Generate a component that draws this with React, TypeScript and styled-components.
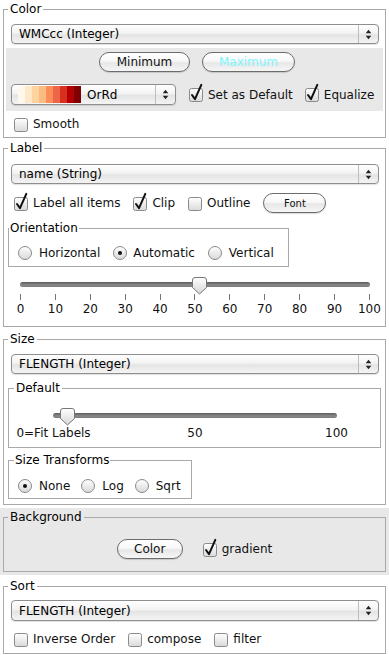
import React from 'react';
import styled, { createGlobalStyle } from 'styled-components';

const Global = createGlobalStyle`
  html, body { margin: 0; padding: 0; background: #fff; }
  body { font-family: "DejaVu Sans", sans-serif; font-size: 12px; color: #000; }
  * { box-sizing: border-box; }
`;

const FONT = `"DejaVu Sans", "Liberation Sans", sans-serif`;

const Page = styled.div`
  width: 389px;
  display: flex;
  flex-direction: column;
  padding-top: 2px;
`;

const Panel = styled.div<{ $gray?: boolean; $mt?: number }>`
  margin-top: ${p => p.$mt ?? 0}px;
  padding: ${p => (p.$gray ? '2px 3px 3px' : '0 3px')};
  background: ${p => (p.$gray ? '#e8e8e8' : 'transparent')};
`;

const Box = styled.fieldset<{ $pt?: number; $pb?: number; $pl?: number; $pr?: number; $w?: number; $mt?: number }>`
  margin: ${p => p.$mt ?? 0}px 0 0 0;
  padding: ${p => p.$pt ?? 0}px ${p => p.$pr ?? 4}px ${p => p.$pb ?? 0}px ${p => p.$pl ?? 4}px;
  border: 1px solid #a9a9a9;
  min-width: 0;
  ${p => (p.$w ? `width: ${p.$w}px;` : '')}
`;

const Legend = styled.legend<{ $px?: number }>`
  padding: 0 ${p => p.$px ?? 2}px;
  font: 12px/14px ${FONT};
  color: #000;
`;

const SelectBox = styled.div<{ $mt?: number; $h?: number; $w?: number; $inline?: boolean }>`
  display: flex;
  align-items: stretch;
  height: ${p => p.$h ?? 20}px;
  margin: ${p => (p.$inline ? '0' : `${p.$mt ?? 0}px 2px 0 3px`)};
  ${p => (p.$w ? `width: ${p.$w}px; flex: none;` : '')}
  border: 1px solid #8e8e8e;
  border-radius: 4px;
  background: linear-gradient(#ffffff, #f3f3f3 45%, #e4e4e4 55%, #f4f4f4);
  box-shadow: 0 1px 1px rgba(0, 0, 0, 0.12);
  overflow: hidden;
`;

const SelectText = styled.span<{ $pl?: number }>`
  flex: 1;
  padding-left: ${p => p.$pl ?? 7}px;
  line-height: ${p => 'inherit'};
  display: flex;
  align-items: center;
  white-space: nowrap;
  font: 12px ${FONT};
`;

const SelectArrows = styled.span`
  width: 20px;
  flex: none;
  border-left: 1px solid #bdbdbd;
  display: flex;
  align-items: center;
  justify-content: center;
`;

const Swatch = styled.span`
  display: flex;
  margin: 1px 0 1px 6px;
  flex: none;
`;

const SwatchCell = styled.span<{ $c: string }>`
  width: 7px;
  background: ${p => p.$c};
`;

const Band = styled.div`
  margin: 4px -2px 0 -2px;
  padding: 4px 0 6px 5px;
  background: #e8e8e8;
  display: flex;
  flex-direction: column;
  gap: 12px;
`;

const ButtonRow = styled.div<{ $gap?: number }>`
  display: flex;
  justify-content: center;
  gap: ${p => p.$gap ?? 12}px;
`;

const Row = styled.div<{ $mt?: number; $pl?: number; $gap?: number; $h?: number; $center?: boolean }>`
  display: flex;
  align-items: center;
  ${p => (p.$center ? 'justify-content: center;' : '')}
  margin-top: ${p => p.$mt ?? 0}px;
  padding-left: ${p => p.$pl ?? 0}px;
  gap: ${p => p.$gap ?? 13}px;
  height: ${p => p.$h ?? 16}px;
`;

const PillButton = styled.button<{ $w: number; $small?: boolean; $ghost?: boolean }>`
  width: ${p => p.$w}px;
  height: 20px;
  padding: 0;
  flex: none;
  border: 1px solid #6c6c6c;
  border-radius: 10px;
  background: linear-gradient(#ffffff 0%, #f8f8f8 45%, #e7e7e7 55%, #f6f6f6 100%);
  box-shadow: 0 1px 1px rgba(0, 0, 0, 0.15);
  font: ${p => (p.$small ? '10px' : '12px')} ${FONT};
  color: ${p => (p.$ghost ? '#80f6ff' : '#111')};
`;

const Option = styled.label<{ $ml?: number; $gapText?: number }>`
  display: flex;
  align-items: center;
  gap: ${p => p.$gapText ?? 5}px;
  margin-left: ${p => p.$ml ?? 0}px;
  white-space: nowrap;
  font: 12px ${FONT};
  color: #111;
`;

const Glyph = styled.svg`
  overflow: visible;
  flex: none;
  display: block;
`;

const SliderBlock = styled.div<{ $mt?: number; $ml: number; $w: number }>`
  margin: ${p => p.$mt ?? 0}px 0 0 ${p => p.$ml}px;
  width: ${p => p.$w}px;
`;

const TrackArea = styled.div`
  position: relative;
  height: 17px;
  padding-top: 5px;
`;

const Track = styled.div`
  height: 5px;
  border-radius: 3px;
  background: linear-gradient(#5c5c5c, #8a8a8a 60%, #7a7a7a);
`;

const Thumb = styled.div`
  position: absolute;
  top: 0;
`;

const TickRow = styled.div<{ $mt?: number }>`
  display: flex;
  justify-content: space-between;
  margin-top: ${p => p.$mt ?? 0}px;
`;

const Tick = styled.div`
  width: 1px;
  display: flex;
  flex-direction: column;
  align-items: center;
`;

const TickLine = styled.div`
  width: 1px;
  height: 6px;
  background: #777;
`;

const TickLabel = styled.span<{ $mt?: number }>`
  margin-top: ${p => p.$mt ?? 2}px;
  white-space: nowrap;
  font: 12px/14px ${FONT};
  color: #111;
`;

const Arrows = () => (
  <svg width="7" height="11" viewBox="0 0 7 11">
    <path d="M3.5 0.8 L6.3 4.2 H0.7 Z M0.7 6.8 H6.3 L3.5 10.2 Z" fill="#222" />
  </svg>
);

const Check = ({ on }: { on?: boolean }) => (
  <Glyph width="14" height="13" viewBox="0 0 14 13">
    <defs>
      <linearGradient id="cbg" x1="0" y1="0" x2="0" y2="1">
        <stop offset="0" stopColor="#ffffff" />
        <stop offset="1" stopColor="#dadada" />
      </linearGradient>
    </defs>
    <rect x="0.5" y="0.5" width="13" height="13" rx="2" fill="url(#cbg)" stroke="#8a8a8a" />
    {on && (
      <path d="M3 7 L6 11.2 L12.3 -3.2" fill="none" stroke="#111" strokeWidth="2" strokeLinecap="round" strokeLinejoin="round" />
    )}
  </Glyph>
);

const Radio = ({ on }: { on?: boolean }) => (
  <Glyph width="14" height="14" viewBox="0 0 14 14">
    <defs>
      <linearGradient id="rbg" x1="0" y1="0" x2="0" y2="1">
        <stop offset="0" stopColor="#ffffff" />
        <stop offset="1" stopColor="#d8d8d8" />
      </linearGradient>
    </defs>
    <circle cx="7" cy="7" r="6.5" fill="url(#rbg)" stroke="#8a8a8a" />
    {on && <circle cx="7" cy="7" r="2" fill="#111" />}
  </Glyph>
);

const ThumbIcon = () => (
  <svg width="15" height="18" viewBox="0 0 15 18">
    <defs>
      <linearGradient id="tbg" x1="0" y1="0" x2="0" y2="1">
        <stop offset="0" stopColor="#ffffff" />
        <stop offset="1" stopColor="#d6d6d6" />
      </linearGradient>
    </defs>
    <path d="M3 0.5 H12 Q14.5 0.5 14.5 3 V10.5 L7.5 17 L0.5 10.5 V3 Q0.5 0.5 3 0.5 Z" fill="url(#tbg)" stroke="#777" />
  </svg>
);

const Select = ({ text, mt, h }: { text: string; mt: number; h?: number }) => (
  <SelectBox $mt={mt} $h={h}>
    <SelectText>{text}</SelectText>
    <SelectArrows>
      <Arrows />
    </SelectArrows>
  </SelectBox>
);

const ORRD = ['#fff7ec', '#fee8c8', '#fdd49e', '#fdbb84', '#fc8d59', '#ef6548', '#d7301f', '#b30000', '#7f0000'];
const TICKS = [0, 10, 20, 30, 40, 50, 60, 70, 80, 90, 100];

export default function App() {
  return (
    <Page>
      <Global />
      <Panel>
        <Box $pb={5}>
          <Legend>Color</Legend>
          <Select text="WMCcc (Integer)" mt={8} />
          <Band>
            <ButtonRow>
              <PillButton $w={91}>Minimum</PillButton>
              <PillButton $w={93} $ghost>Maximum</PillButton>
            </ButtonRow>
            <Row $h={21} $gap={0}>
              <SelectBox $inline $w={165} $h={21}>
                <Swatch>
                  {ORRD.map(c => (
                    <SwatchCell key={c} $c={c} />
                  ))}
                </Swatch>
                <SelectText $pl={6}>OrRd</SelectText>
                <SelectArrows>
                  <Arrows />
                </SelectArrows>
              </SelectBox>
              <Option $ml={13}>
                <Check on />
                Set as Default
              </Option>
              <Option $ml={12}>
                <Check on />
                Equalize
              </Option>
            </Row>
          </Band>
          <Row $mt={5} $pl={6}>
            <Option>
              <Check />
              Smooth
            </Option>
          </Row>
        </Box>
      </Panel>

      <Panel $mt={3}>
        <Box $pb={10}>
          <Legend>Label</Legend>
          <Select text="name (String)" mt={9} />
          <Row $mt={9} $pl={6} $h={20} $gap={13}>
            <Option>
              <Check on />
              Label all items
            </Option>
            <Option>
              <Check on />
              Clip
            </Option>
            <Option>
              <Check />
              Outline
            </Option>
            <PillButton $w={63} $small>Font</PillButton>
          </Row>
          <Box $mt={8} $w={281} $pl={0} $pr={0} $pb={5}>
            <Legend $px={1}>Orientation</Legend>
            <Row $mt={10} $pl={9} $gap={13}>
              <Option $gapText={7}>
                <Radio />
                Horizontal
              </Option>
              <Option $gapText={6}>
                <Radio on />
                Automatic
              </Option>
              <Option $gapText={7}>
                <Radio />
                Vertical
              </Option>
            </Row>
          </Box>
          <SliderBlock $mt={10} $ml={12} $w={350}>
            <TrackArea>
              <Track />
              <Thumb style={{ left: 172 }}>
                <ThumbIcon />
              </Thumb>
            </TrackArea>
            <TickRow>
              {TICKS.map(t => (
                <Tick key={t}>
                  <TickLine />
                  <TickLabel>{t}</TickLabel>
                </Tick>
              ))}
            </TickRow>
          </SliderBlock>
        </Box>
      </Panel>

      <Panel $mt={5}>
        <Box $pb={5}>
          <Legend>Size</Legend>
          <Select text="FLENGTH (Integer)" mt={8} />
          <Box $mt={7} $pl={5} $pr={0} $pb={7}>
            <Legend>Default</Legend>
            <SliderBlock $mt={13} $ml={39} $w={284}>
              <TrackArea>
                <Track />
                <Thumb style={{ left: 7 }}>
                  <ThumbIcon />
                </Thumb>
              </TrackArea>
              <TickRow $mt={1}>
                {['0=Fit Labels', '50', '100'].map(t => (
                  <Tick key={t}>
                    <TickLabel $mt={0}>{t}</TickLabel>
                  </Tick>
                ))}
              </TickRow>
            </SliderBlock>
          </Box>
          <Box $mt={5} $w={184} $pl={5} $pr={0} $pb={4}>
            <Legend $px={1}>Size Transforms</Legend>
            <Row $mt={11} $pl={4} $gap={11}>
              <Option $gapText={7}>
                <Radio on />
                None
              </Option>
              <Option $gapText={7}>
                <Radio />
                Log
              </Option>
              <Option $gapText={7}>
                <Radio />
                Sqrt
              </Option>
            </Row>
          </Box>
        </Box>
      </Panel>

      <Panel $gray $mt={3}>
        <Box $pb={12}>
          <Legend>Background</Legend>
          <Row $mt={15} $h={20} $gap={20} $center>
            <PillButton $w={66}>Color</PillButton>
            <Option>
              <Check on />
              gradient
            </Option>
          </Row>
        </Box>
      </Panel>

      <Panel $mt={4}>
        <Box $pb={6}>
          <Legend>Sort</Legend>
          <Select text="FLENGTH (Integer)" mt={7} h={21} />
          <Row $mt={10} $pl={6} $gap={13}>
            <Option>
              <Check />
              Inverse Order
            </Option>
            <Option>
              <Check />
              compose
            </Option>
            <Option>
              <Check />
              filter
            </Option>
          </Row>
        </Box>
      </Panel>
    </Page>
  );
}
